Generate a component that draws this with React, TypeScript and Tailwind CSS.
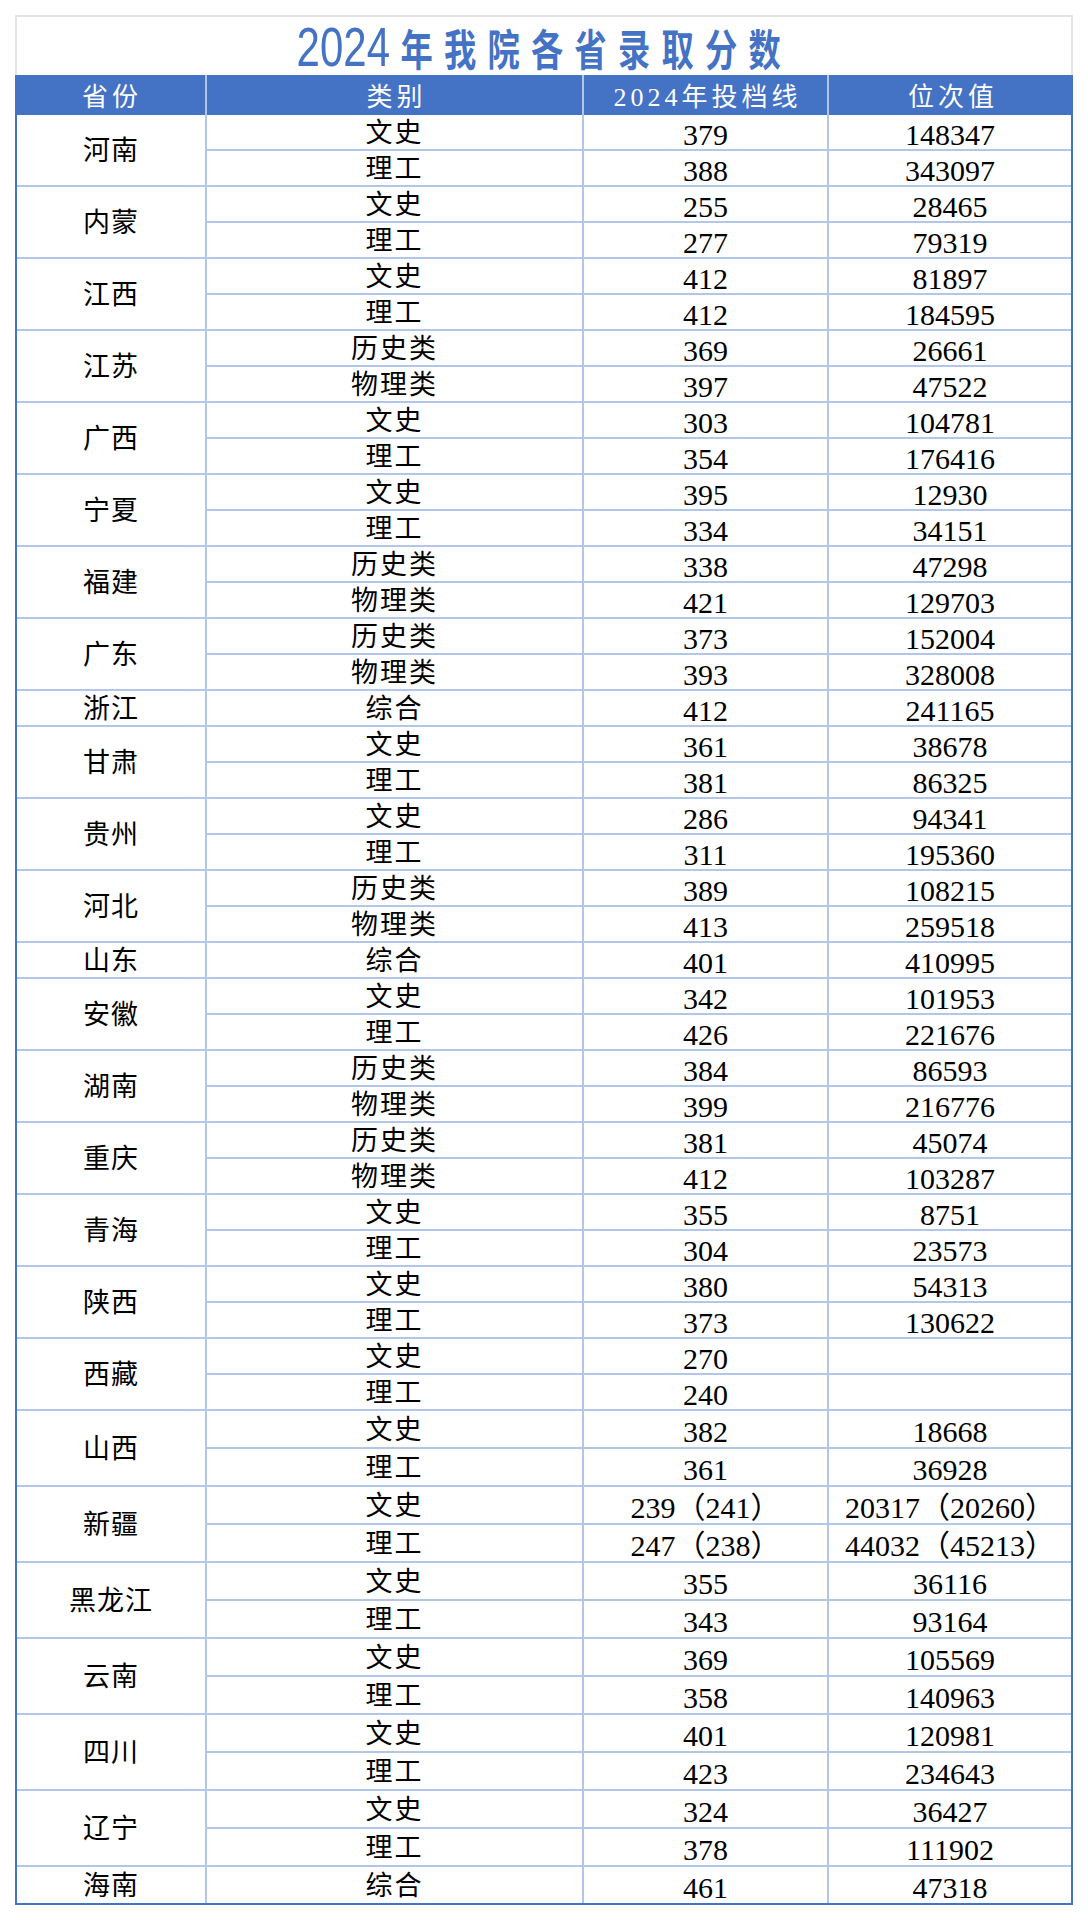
import React from "react";

type Row = [string, string, string];
const data: [string, Row[]][] = [
  ["河南", [["文史", "379", "148347"], ["理工", "388", "343097"]]],
  ["内蒙", [["文史", "255", "28465"], ["理工", "277", "79319"]]],
  ["江西", [["文史", "412", "81897"], ["理工", "412", "184595"]]],
  ["江苏", [["历史类", "369", "26661"], ["物理类", "397", "47522"]]],
  ["广西", [["文史", "303", "104781"], ["理工", "354", "176416"]]],
  ["宁夏", [["文史", "395", "12930"], ["理工", "334", "34151"]]],
  ["福建", [["历史类", "338", "47298"], ["物理类", "421", "129703"]]],
  ["广东", [["历史类", "373", "152004"], ["物理类", "393", "328008"]]],
  ["浙江", [["综合", "412", "241165"]]],
  ["甘肃", [["文史", "361", "38678"], ["理工", "381", "86325"]]],
  ["贵州", [["文史", "286", "94341"], ["理工", "311", "195360"]]],
  ["河北", [["历史类", "389", "108215"], ["物理类", "413", "259518"]]],
  ["山东", [["综合", "401", "410995"]]],
  ["安徽", [["文史", "342", "101953"], ["理工", "426", "221676"]]],
  ["湖南", [["历史类", "384", "86593"], ["物理类", "399", "216776"]]],
  ["重庆", [["历史类", "381", "45074"], ["物理类", "412", "103287"]]],
  ["青海", [["文史", "355", "8751"], ["理工", "304", "23573"]]],
  ["陕西", [["文史", "380", "54313"], ["理工", "373", "130622"]]],
  ["西藏", [["文史", "270", ""], ["理工", "240", ""]]],
  ["山西", [["文史", "382", "18668"], ["理工", "361", "36928"]]],
  ["新疆", [["文史", "239（241）", "20317（20260）"], ["理工", "247（238）", "44032（45213）"]]],
  ["黑龙江", [["文史", "355", "36116"], ["理工", "343", "93164"]]],
  ["云南", [["文史", "369", "105569"], ["理工", "358", "140963"]]],
  ["四川", [["文史", "401", "120981"], ["理工", "423", "234643"]]],
  ["辽宁", [["文史", "324", "36427"], ["理工", "378", "111902"]]],
  ["海南", [["综合", "461", "47318"]]],
];

const cell = "bg-white flex items-center justify-center text-black";

export default function App() {
  const cells: React.ReactNode[] = [];
  data.forEach(([prov, rows], i) => {
    cells.push(
      <div
        key={`p${i}`}
        className={`${cell} ${rows.length === 2 ? "row-span-2" : ""} text-[27px] tracking-[1px] pt-[2px]`}
      >
        {prov}
      </div>
    );
    rows.forEach((r, j) => {
      cells.push(
        <div key={`c${i}-${j}`} className={`${cell} text-[27px] tracking-[2px] pt-[3px]`}>
          {r[0]}
        </div>
      );
      cells.push(
        <div key={`s${i}-${j}`} className={`${cell} text-[30px] pt-[4px]`}>
          {r[1]}
        </div>
      );
      cells.push(
        <div key={`r${i}-${j}`} className={`${cell} text-[30px] pt-[4px]`}>
          {r[2]}
        </div>
      );
    });
  });

  return (
    <div className="w-[1088px] h-[1920px] bg-white pt-[15px] font-['Liberation_Serif','Noto_Sans_CJK_SC',serif]">
      <div className="ml-[15px] w-[1058px]">
        <div className="h-[60px] border-2 border-b-0 border-[#e3e3e3] flex items-center justify-center">
          <div className="scale-x-75 whitespace-nowrap text-[#4472c4] font-['Liberation_Sans','Noto_Sans_CJK_SC',sans-serif] leading-none flex items-end mt-[2px]">
            <span className="text-[56px]">2024</span>
            <span className="text-[43px] font-bold tracking-[15px] ml-[14px] mb-[2px]">年我院各省录取分数</span>
          </div>
        </div>
        <div className="grid grid-cols-[190px_375px_243px_244px] gap-x-[2px] bg-[#b4c6e7] h-[40px]">
          {["省份", "类别", "2024年投档线", "位次值"].map((h) => (
            <div
              key={h}
              className="bg-[#4472c4] text-white flex items-center justify-center text-[26px] tracking-[4px] pl-[4px] pt-[3px]"
            >
              {h}
            </div>
          ))}
        </div>
        <div className="border-x-2 border-b-2 border-[#4472c4]">
          <div className="grid grid-cols-[188px_375px_243px_242px] grid-rows-[repeat(36,34px)_repeat(13,36px)] gap-[2px] bg-[#b4c6e7]">
            {cells}
          </div>
        </div>
      </div>
    </div>
  );
}
